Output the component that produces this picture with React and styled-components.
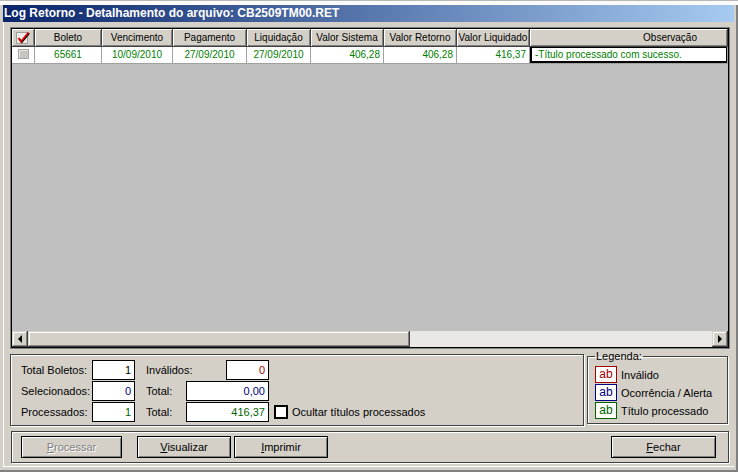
import styled, { createGlobalStyle } from 'styled-components';

const GlobalStyle = createGlobalStyle`
  html, body { margin: 0; padding: 0; }
  body {
    font-family: "Liberation Sans", Arial, sans-serif;
    font-size: 11px;
    background: #D4D0C8;
  }
  * { box-sizing: border-box; }
`;

const Page = styled.div`
  width: 738px;
  height: 472px;
  overflow: hidden;
  display: flex;
  flex-direction: column;
  background: #D4D0C8;
  box-shadow: inset -2px 0 0 #808080, inset 0 -2px 0 #808080;
`;

const TopStrip = styled.div`
  height: 5px;
  flex-shrink: 0;
  background: #fbfbfb;
  border-top: 1px solid #b8b8b8;
`;

const Window = styled.div`
  flex: 1;
  display: flex;
  flex-direction: column;
  margin: 0 4px 5px 3px;
`;

const TitleBar = styled.div`
  height: 17px;
  flex-shrink: 0;
  background: linear-gradient(to right, #0A246A, #A6CAF0);
  color: #fff;
  font-weight: bold;
  font-size: 12px;
  line-height: 17px;
  padding-left: 1px;
  white-space: nowrap;
`;

const Frame = styled.div`
  flex: 1;
  display: flex;
  flex-direction: column;
  gap: 5px;
  padding: 5px 4px 3px 6px;
  border-left: 1px solid #fff;
  border-bottom: 1px solid #fff;
`;

const GridOuter = styled.div`
  height: 322px;
  flex-shrink: 0;
  border: 1px solid #808080;
`;

const GridInner = styled.div`
  height: 100%;
  border: 1px solid #000;
  display: flex;
  flex-direction: column;
  background: #C0C0C0;
  font-size: 10px;
`;

const Row = styled.div`
  display: flex;
  flex-shrink: 0;
`;

const HeadCell = styled.div`
  width: ${({ $w }) => ($w ? `${$w}px` : 'auto')};
  flex: ${({ $w }) => ($w ? 'none' : '1')};
  height: 18px;
  background: #D4D0C8;
  border-right: 1px solid #404040;
  border-bottom: 1px solid #404040;
  box-shadow: inset 1px 1px 0 #fff, inset -1px -1px 0 #808080;
  white-space: nowrap;
  overflow: hidden;
  display: flex;
  align-items: center;
  justify-content: ${({ $end }) => ($end ? 'flex-end' : 'center')};
  padding-right: ${({ $end }) => ($end ? '30px' : '0')};
`;

const DataCell = styled.div`
  width: ${({ $w }) => ($w ? `${$w}px` : 'auto')};
  flex: ${({ $w }) => ($w ? 'none' : '1')};
  height: 17px;
  line-height: 16px;
  background: #fff;
  color: #008000;
  text-align: ${({ $align }) => $align || 'center'};
  padding: 0 3px 0 ${({ $align }) => ($align === 'left' ? '5px' : '3px')};
  border-right: 1px solid #A0A0A0;
  border-bottom: 1px solid #A0A0A0;
  white-space: nowrap;
  overflow: hidden;
  box-shadow: ${({ $focus }) => ($focus ? 'inset 2px -2px 0 #000, inset -1px 1px 0 #000' : 'none')};
`;

const RowCheck = styled.span`
  display: inline-block;
  width: 11px;
  height: 10px;
  margin-top: 2px;
  background: #C8C6C0;
  border: 1px solid #A8A6A0;
  box-shadow: inset 1px 1px 0 #e8e6e0;
`;

const EmptyArea = styled.div`
  flex: 1;
  background: #C0C0C0;
`;

const ScrollBar = styled.div`
  height: 16px;
  flex-shrink: 0;
  display: flex;
  background: #EAE8E4;
`;

const raised = `
  background: #D4D0C8;
  box-shadow: inset -1px -1px 0 #404040, inset 1px 1px 0 #D4D0C8,
    inset -2px -2px 0 #808080, inset 2px 2px 0 #fff;
`;

const ScrollButton = styled.div`
  width: 16px;
  height: 16px;
  ${raised}
  display: flex;
  align-items: center;
  justify-content: center;
`;

const Arrow = styled.span`
  width: 0;
  height: 0;
  border-top: 4px solid transparent;
  border-bottom: 4px solid transparent;
  ${({ $dir }) => ($dir === 'left' ? 'border-right: 4px solid #000;' : 'border-left: 4px solid #000;')}
`;

const Thumb = styled.div`
  width: 382px;
  height: 16px;
  ${raised}
`;

const Track = styled.div`
  flex: 1;
`;

const BottomRow = styled.div`
  height: 72px;
  flex-shrink: 0;
  display: flex;
  align-items: flex-start;
`;

const etched = `
  border: 1px solid #404040;
  box-shadow: inset 1px 1px 0 #fff, 1px 1px 0 #fff;
`;

const SummaryPanel = styled.div`
  width: 574px;
  height: 72px;
  ${etched}
  padding: 5px 0 0 10px;
  display: flex;
  flex-direction: column;
  gap: 1px;
`;

const SummaryRow = styled.div`
  display: flex;
  align-items: center;
  height: 20px;
`;

const Label = styled.span`
  width: ${({ $w }) => ($w ? `${$w}px` : 'auto')};
  white-space: nowrap;
`;

const ValueBox = styled.div`
  width: ${({ $w }) => $w}px;
  height: 20px;
  background: #fff;
  border: 1px solid #000;
  text-align: right;
  padding-right: 3px;
  line-height: 18px;
  color: ${({ $color }) => $color || '#000'};
`;

const Group = styled.div`
  width: 123px;
  margin-left: 11px;
  display: flex;
  align-items: center;
  justify-content: space-between;
`;

const CheckOption = styled.label`
  display: flex;
  align-items: center;
  gap: 4px;
  margin-left: 5px;
`;

const CheckBox = styled.span`
  width: 14px;
  height: 14px;
  background: #fff;
  border: 2px solid #000;
`;

const LegendBox = styled.fieldset`
  width: 141px;
  height: 74px;
  margin: -4px 0 0 3px;
  padding: 0 0 0 7px;
  min-width: 0;
  ${etched}
  display: flex;
  flex-direction: column;
  gap: 1px;
`;

const LegendTitle = styled.legend`
  padding: 0 1px;
  line-height: 12px;
`;

const LegendItem = styled.div`
  display: flex;
  align-items: center;
  height: 17px;
  gap: 4px;
  &:first-of-type { margin-top: 4px; }
`;

const Swatch = styled.span`
  width: 22px;
  height: 17px;
  background: #fff;
  border: 1px solid ${({ $color }) => $color};
  color: ${({ $color }) => $color};
  font-size: 12px;
  text-align: center;
  line-height: 14px;
`;

const ButtonPanel = styled.div`
  height: 32px;
  flex-shrink: 0;
  margin: 0 1px;
  ${etched}
  display: flex;
  align-items: flex-start;
  padding: 4px 12px 0 9px;
`;

const Button = styled.button`
  width: ${({ $w }) => $w}px;
  height: 22px;
  margin-left: ${({ $ml }) => ($ml === 'auto' ? 'auto' : `${$ml || 0}px`)};
  font-family: inherit;
  font-size: 11px;
  color: ${({ disabled }) => (disabled ? '#808080' : '#000')};
  text-shadow: ${({ disabled }) => (disabled ? '1px 1px 0 #fff' : 'none')};
  background: #D4D0C8;
  border: 1px solid #000;
  box-shadow: inset 1px 1px 0 #fff, inset -1px -1px 0 #808080;
  padding: 0;
`;

const columns = [
  { key: 'chk', w: 23 },
  { key: 'boleto', w: 67, title: 'Boleto', value: '65661' },
  { key: 'venc', w: 71, title: 'Vencimento', value: '10/09/2010' },
  { key: 'pag', w: 74, title: 'Pagamento', value: '27/09/2010' },
  { key: 'liq', w: 64, title: 'Liquidação', value: '27/09/2010' },
  { key: 'vs', w: 73, title: 'Valor Sistema', value: '406,28', align: 'right' },
  { key: 'vr', w: 73, title: 'Valor Retorno', value: '406,28', align: 'right' },
  { key: 'vl', w: 73, title: 'Valor Liquidado', value: '416,37', align: 'right' },
  { key: 'obs', title: 'Observação', value: '-Título processado com sucesso.', align: 'left', focus: true, end: true },
];

const CheckIcon = () => (
  <svg width="14" height="13" viewBox="0 0 14 13">
    <rect x="0.5" y="1.5" width="11" height="11" fill="#EEECE8" stroke="#A09E98" />
    <path d="M2.5 7 L5 10.5 L12.5 1.5" stroke="#000" strokeWidth="1.5" fill="none" transform="translate(0.8 0.8)" />
    <path d="M2.5 7 L5 10.5 L12.5 1.5" stroke="#E00000" strokeWidth="1.8" fill="none" />
  </svg>
);

export default function App() {
  return (
    <Page>
      <GlobalStyle />
      <TopStrip />
      <Window>
        <TitleBar>Log Retorno - Detalhamento do arquivo: CB2509TM00.RET</TitleBar>
        <Frame>
          <GridOuter>
            <GridInner>
              <Row>
                {columns.map((c) => (
                  <HeadCell key={c.key} $w={c.w} $end={c.end}>
                    {c.key === 'chk' ? <CheckIcon /> : c.title}
                  </HeadCell>
                ))}
              </Row>
              <Row>
                {columns.map((c) => (
                  <DataCell key={c.key} $w={c.w} $align={c.align} $focus={c.focus}>
                    {c.key === 'chk' ? <RowCheck /> : c.value}
                  </DataCell>
                ))}
              </Row>
              <EmptyArea />
              <ScrollBar>
                <ScrollButton><Arrow $dir="left" /></ScrollButton>
                <Thumb />
                <Track />
                <ScrollButton><Arrow $dir="right" /></ScrollButton>
              </ScrollBar>
            </GridInner>
          </GridOuter>

          <BottomRow>
            <SummaryPanel>
              <SummaryRow>
                <Label $w={71}>Total Boletos:</Label>
                <ValueBox $w={43}>1</ValueBox>
                <Group>
                  <Label>Inválidos:</Label>
                  <ValueBox $w={43} $color="#A00000">0</ValueBox>
                </Group>
              </SummaryRow>
              <SummaryRow>
                <Label $w={71}>Selecionados:</Label>
                <ValueBox $w={43} $color="#000080">0</ValueBox>
                <Group>
                  <Label>Total:</Label>
                  <ValueBox $w={83} $color="#000080">0,00</ValueBox>
                </Group>
              </SummaryRow>
              <SummaryRow>
                <Label $w={71}>Processados:</Label>
                <ValueBox $w={43} $color="#006400">1</ValueBox>
                <Group>
                  <Label>Total:</Label>
                  <ValueBox $w={83} $color="#006400">416,37</ValueBox>
                </Group>
                <CheckOption>
                  <CheckBox />
                  Ocultar títulos processados
                </CheckOption>
              </SummaryRow>
            </SummaryPanel>

            <LegendBox>
              <LegendTitle>Legenda:</LegendTitle>
              <LegendItem>
                <Swatch $color="#A00000">ab</Swatch>
                Inválido
              </LegendItem>
              <LegendItem>
                <Swatch $color="#000080">ab</Swatch>
                Ocorrência / Alerta
              </LegendItem>
              <LegendItem>
                <Swatch $color="#006400">ab</Swatch>
                Título processado
              </LegendItem>
            </LegendBox>
          </BottomRow>

          <ButtonPanel>
            <Button $w={101} disabled><u>P</u>rocessar</Button>
            <Button $w={94} $ml={15}><u>V</u>isualizar</Button>
            <Button $w={94} $ml={3}><u>I</u>mprimir</Button>
            <Button $w={105} $ml="auto"><u>F</u>echar</Button>
          </ButtonPanel>
        </Frame>
      </Window>
    </Page>
  );
}
